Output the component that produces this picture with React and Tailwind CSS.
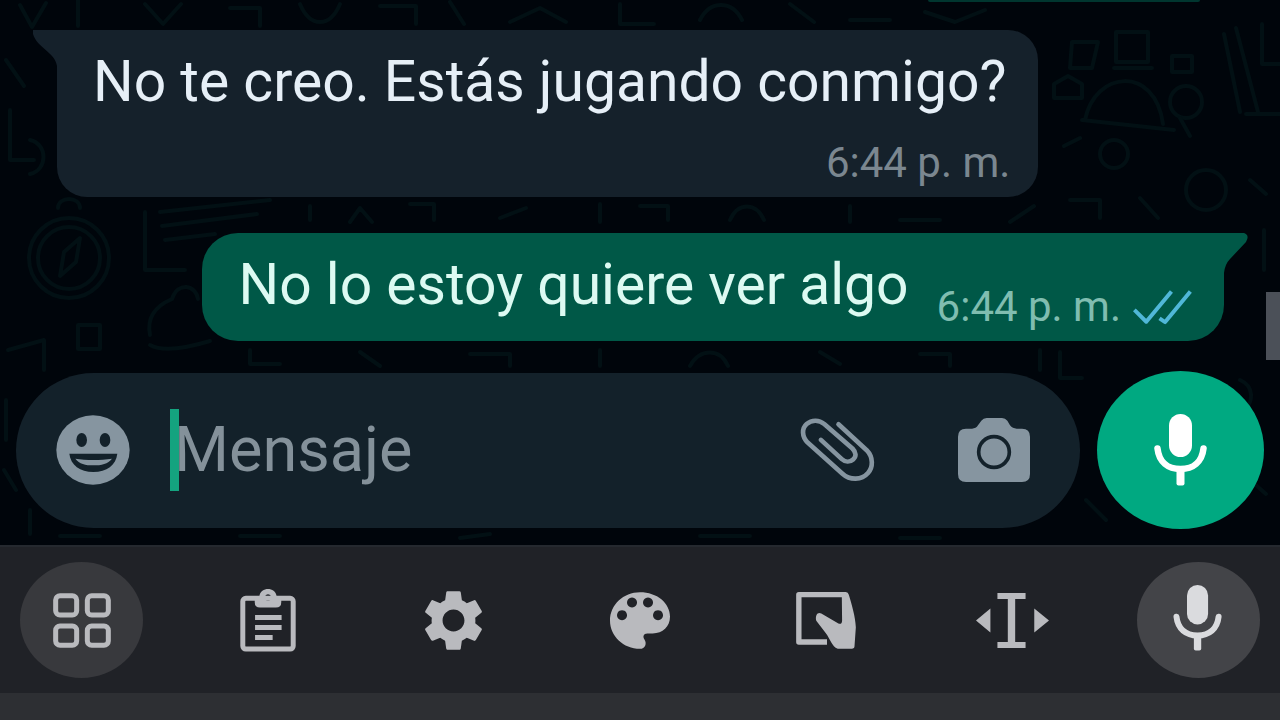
import { MdSettings } from "react-icons/md";

function Doodles() {
  return (
    <svg
      className="pointer-events-none absolute inset-0 h-full w-full"
      viewBox="0 0 1280 545"
      preserveAspectRatio="xMidYMid slice"
      fill="none"
      stroke="#021014"
      strokeWidth="4"
      strokeLinecap="round"
      strokeLinejoin="round"
      aria-hidden="true"
    >
      <circle cx="69" cy="258" r="40" />
      <circle cx="69" cy="258" r="31" />
      <path d="M80 238L76 262 60 276 64 252ZM58 208c0-12 22-12 22 0M145 212v58h40M160 212l110-12M162 226l95-12M165 240l50-6" />
      <path d="M150 335c-4-20 8-30 22-36 6-18 24-14 26 0M150 345c14 8 40 2 60-4M78 325h22v24H78zM8 350l36-10v30" />
      <path d="M20 5l12 22 14-24M78 0v26M145 4l18 20 18-20M230 8h30v18M300 4c10 24 30 24 40 0M380 6h36v18M450 2l14 22M510 22l30-14 26 14M620 4v20h34M700 20c10-20 32-20 42 0M790 4l24 18M850 20h40M925 12l30 10 30-12" />
      <path d="M1072 42h26l-6 26h-22zM1116 32h32v30h-32zM1114 68h38M1085 120c10-50 70-55 78 4M1082 120l92 10M1172 56h20v16h-20zM1054 84l14-8 14 8v14h-28zM1224 34l16 78M1236 28l22 84M1262 24v40h18M1246 114h34" />
      <circle cx="1186" cy="102" r="16" />
      <circle cx="1206" cy="190" r="20" />
      <circle cx="1114" cy="154" r="14" />
      <path d="M1064 146l16-8M1190 136l-10-18M1250 180l16 14M1070 200h30v18M1140 198l18 20M1264 230v40M10 110v50h24M6 60l18 26M30 140c18 4 18 30 0 34" />
      <path d="M310 206v14M350 222l10-14 12 14M410 204h24v16M500 218l26-10M600 204v18M640 206h28v14M730 220c8-18 26-18 34 0M850 206v16M900 220h40M1010 222l24-16" />
      <path d="M250 350v14h30M360 352l20 14M470 354h40v12M600 350v16M690 366c10-18 30-18 38 0M820 352l20 12M920 354h30v12M1040 350v20M1060 352v26h22M1240 380c14 6 14 22 4 30M1250 480l16 14M1086 500l20 20M6 400v40M4 470l12 20M30 510v24M60 536h40M240 536h40M460 538l30-4M700 536h50M900 538h40" />
    </svg>
  );
}

function Mic({ className }) {
  return (
    <svg className={className} viewBox="0 0 54 72" aria-hidden="true">
      <rect x="15" width="23" height="43" rx="11.5" fill="currentColor" />
      <path d="M3.5 34.500C5 48 14 55 26.500 55S48 48 49.500 34.500" fill="none" stroke="currentColor" strokeWidth="6.500" strokeLinecap="round" />
      <rect x="22.500" y="54" width="8" height="17.500" rx="2" fill="currentColor" />
    </svg>
  );
}

function Smile() {
  return (
    <svg className="h-[70px] w-[74px]" viewBox="0 0 222 210" aria-hidden="true">
      <ellipse cx="111" cy="105" rx="110" ry="104" fill="#8695a0" />
      <g fill="#13212a">
        <ellipse cx="77" cy="75" rx="16" ry="21" />
        <ellipse cx="147" cy="75" rx="16" ry="21" />
        <path d="M40 116H184C180 150 152 171 112 171S44 150 40 116Z" />
      </g>
      <path d="M58 131C90 136 134 136 168 131C156 147 136 151 112 151S70 147 58 131Z" fill="#8695a0" />
    </svg>
  );
}

function Clip() {
  return (
    <svg className="h-[68px] w-[77px]" viewBox="0 0 230 205" fill="none" stroke="#8695a0" strokeWidth="14" strokeLinecap="round" strokeLinejoin="round" aria-hidden="true">
      <path d="M118 25L203 103C224 125 222 155 207 172C188 194 152 194 130 174L25 80C7 62 7 37 22 24C38 10 60 12 75 24L160 98C172 110 172 122 162 131C152 140 138 139 128 130L65 72" />
    </svg>
  );
}

function Camera() {
  return (
    <svg className="h-16 w-[72px]" viewBox="0 0 216 192" aria-hidden="true">
      <path d="M70 8Q76 0 86 0H132Q142 0 148 8L156 22Q164 32 176 32H192Q216 32 216 56V168Q216 192 192 192H24Q0 192 0 168V56Q0 32 24 32H42Q54 32 60 22Z" fill="#8695a0" />
      <circle cx="108" cy="102" r="46" fill="none" stroke="#13212a" strokeWidth="11" />
    </svg>
  );
}

function Ticks() {
  return (
    <svg className="h-[37px] w-[59px]" viewBox="0 0 178 110" fill="none" stroke="#50b7d8" strokeWidth="12" strokeLinejoin="round" aria-hidden="true">
      <path d="M4 62L40 98L116 7M80 88L97 99L173 7" />
    </svg>
  );
}

function GridIcon() {
  return (
    <svg className="h-[55px] w-[58px]" viewBox="0 0 174 165" fill="none" stroke="currentColor" strokeWidth="15" aria-hidden="true">
      <rect x="8" y="8" width="63" height="58" rx="13" />
      <rect x="103" y="8" width="63" height="58" rx="13" />
      <rect x="8" y="99" width="63" height="58" rx="13" />
      <rect x="103" y="99" width="63" height="58" rx="13" />
    </svg>
  );
}

function ClipboardIcon() {
  return (
    <svg className="h-[63px] w-[56px]" viewBox="0 0 168 190" aria-hidden="true">
      <g fill="none" stroke="currentColor" strokeWidth="15">
        <rect x="8" y="28" width="152" height="153" rx="9" />
        <path d="M45 86H125M45 116H125M45 146H98" />
      </g>
      <path fillRule="evenodd" fill="currentColor" d="M44 22H58C62 -7 106 -7 110 22H124V40Q124 56 108 56H60Q44 56 44 40ZM84 16a10 10 0 1 0 .1 0Z" />
    </svg>
  );
}

function PaletteIcon() {
  return (
    <svg className="h-[57px] w-[60px]" viewBox="0 0 180 170" aria-hidden="true">
      <path fill="currentColor" fillRule="evenodd" d="M90 0C141 0 180 32 180 74C180 103 158 124 128 124H112C100 124 98 134 103 141C112 154 105 170 90 170C40 170 0 132 0 85S40 0 90 0ZM36 54a15 15 0 1 0 .1 0ZM66 16a15 15 0 1 0 .1 0ZM114 16a15 15 0 1 0 .1 0ZM144 54a15 15 0 1 0 .1 0Z" />
    </svg>
  );
}

function HandIcon() {
  return (
    <svg className="h-[57px] w-[60px]" viewBox="0 0 178 170" aria-hidden="true">
      <path d="M92 149H8V8H148" fill="none" stroke="currentColor" strokeWidth="16" strokeLinejoin="round" />
      <path d="M136 0H148Q155 0 157 8C166 38 177 74 178 105L174 162Q174 169 166 169H124C106 162 102 140 88 122L60 86C56 70 64 58 75 64L126 94Q137 98 137 84Z" fill="currentColor" />
    </svg>
  );
}

function CursorIcon() {
  return (
    <svg className="h-[55px] w-[73px]" viewBox="0 0 218 164" fill="currentColor" aria-hidden="true">
      <path d="M64 0H148V18H117V146H148V164H64V146H95V18H64Z" />
      <path d="M0 82L43 46V118ZM218 82L174 46V118Z" />
    </svg>
  );
}

const tools = [
  { label: "Menú", icon: <GridIcon />, round: "bg-[#38393d]" },
  { label: "Portapapeles", icon: <ClipboardIcon /> },
  { label: "Ajustes", icon: <MdSettings className="size-[73px]" /> },
  { label: "Temas", icon: <PaletteIcon /> },
  { label: "Modo de una mano", icon: <HandIcon /> },
  { label: "Edición de texto", icon: <CursorIcon /> },
  { label: "Dictado", icon: <Mic className="mb-1 h-[66px] w-[52px] text-[#dadbde]" />, round: "bg-[#434448]" },
];

export default function App() {
  return (
    <div className="flex min-h-screen flex-col bg-[#2d2f33] font-[Roboto,sans-serif]">
      <main className="relative flex flex-col bg-[#00050b]">
        <Doodles />
        <div className="absolute right-0 top-[292px] h-[68px] w-3.5 bg-[#4b5058]" />

        <section className="relative flex flex-col pl-[57px] pr-14">
          <div className="mr-6 h-0.5 w-[272px] self-end rounded-b-full bg-[#00362f]" />

          <article className="relative mt-7 flex flex-col self-start rounded-[30px] rounded-tl-none bg-[#15212b] pb-3 pl-9 pr-7 pt-5">
            <svg className="absolute right-full top-0 h-9 w-6" viewBox="0 0 24 36" aria-hidden="true">
              <path d="M0 0H24V36C22 22 4 18 0 4Z" fill="#15212b" />
            </svg>
            <p className="mr-1 text-[57px] leading-[64px] text-[#e6eff7]">No te creo. Estás jugando conmigo?</p>
            <time className="mt-[27px] self-end text-[42px] leading-[44px] text-[#7b8790]">6:44 p. m.</time>
          </article>

          <article className="relative mt-9 flex items-end gap-7 self-end rounded-[36px] rounded-tr-none bg-[#005847] pb-3 pl-9 pr-8 pt-5">
            <svg className="absolute left-full top-0 h-10 w-6" viewBox="0 0 24 40" aria-hidden="true">
              <path d="M0 0H20Q26 2 22 9L6 26Q1 31 0 40Z" fill="#005847" />
            </svg>
            <p className="mb-3 text-[57px] leading-[64px] text-[#dcfaf2]">No lo estoy quiere ver algo</p>
            <div className="flex items-center gap-3">
              <time className="text-[42px] leading-[44px] text-[#80bdb0]">6:44 p. m.</time>
              <Ticks />
            </div>
          </article>
        </section>

        <form className="relative mt-[30px] flex items-center gap-[17px] pb-4 pl-4 pr-4" onSubmit={(e) => e.preventDefault()}>
          <div className="flex h-[155px] min-w-0 flex-1 items-center rounded-full bg-[#13212a] pl-10 pr-[50px]">
            <button type="button" aria-label="Emojis"><Smile /></button>
            <div className="relative ml-10 min-w-0 flex-1">
              <input
                aria-label="Mensaje"
                placeholder="Mensaje"
                className="block h-[82px] w-full bg-transparent pl-1 text-[63px] leading-[82px] text-[#e6eff7] outline-none placeholder:text-[#84919a]"
              />
              <span className="absolute left-0 top-0 h-[82px] w-[9px] bg-[#14a37f]" />
            </div>
            <button type="button" aria-label="Adjuntar" className="mr-[82px]"><Clip /></button>
            <button type="button" aria-label="Cámara"><Camera /></button>
          </div>
          <button type="button" aria-label="Grabar audio" className="flex h-[158px] w-[167px] items-center justify-center rounded-[50%] bg-[#00a981] text-white">
            <Mic className="h-[72px] w-[54px]" />
          </button>
        </form>
      </main>

      <nav aria-label="Herramientas del teclado" className="flex items-center justify-between border-t-2 border-[#25292f] bg-[#202227] px-5 py-[15px] text-[#b9babe]">
        {tools.map((t) => (
          <button key={t.label} type="button" aria-label={t.label} className={"flex h-[116px] w-[123px] items-center justify-center rounded-[50%] " + (t.round || "")}>
            {t.icon}
          </button>
        ))}
      </nav>
    </div>
  );
}
